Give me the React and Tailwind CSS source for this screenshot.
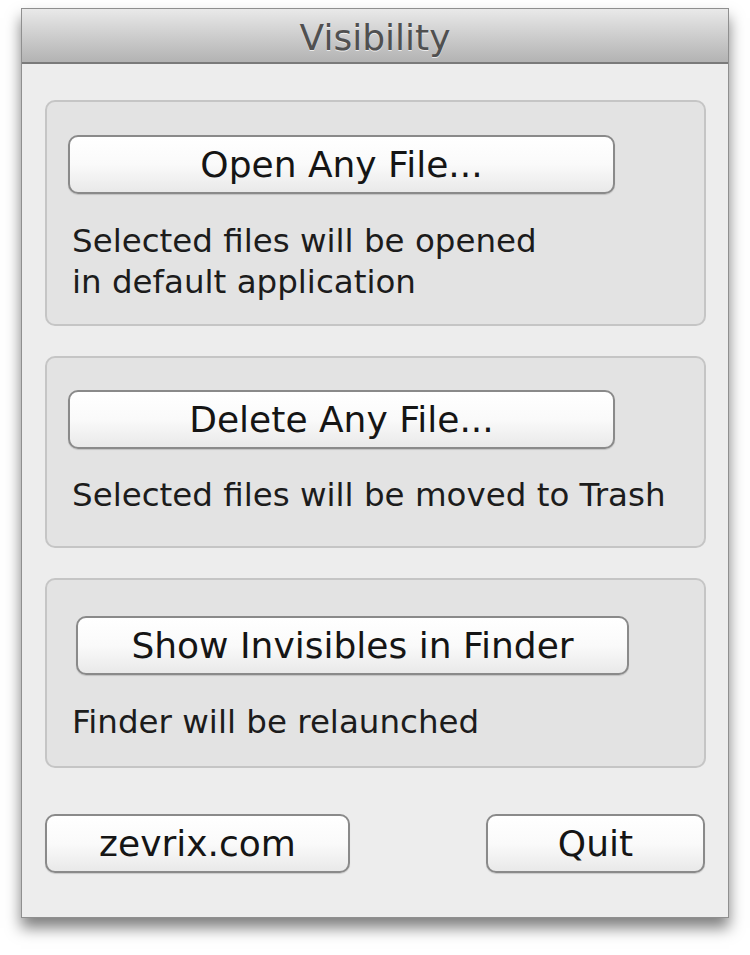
const btn =
  "flex items-center justify-center h-[59px] rounded-[10px] border-2 border-[#8a8a8a] bg-linear-to-b from-white via-[#fafafa] to-[#e9e9e9] text-[36px] leading-none text-[#151515] shadow-[0_1px_1px_rgba(0,0,0,0.15)]";

const label = "text-[32.5px] leading-[41px] text-[#1c1c1c] pl-[4px]";

const group =
  "flex flex-col rounded-[10px] border-2 border-[#c5c5c5] bg-[#e3e3e3] pl-[21px]";

export default function App() {
  return (
    <div className="w-[750px] h-[955px] bg-white pt-[8px] pl-[21px] font-['DejaVu_Sans',sans-serif]">
      <div className="w-[708px] h-[910px] flex flex-col border border-[#8f8f8f] bg-[#ededed] shadow-[0_10px_14px_rgba(0,0,0,0.5)]">
        {/* title bar */}
        <div className="h-[55px] flex items-center justify-center pt-[4px] border-b-2 border-[#7a7a7a] bg-linear-to-b from-[#e9e9e9] to-[#b3b3b3]">
          <span className="text-[36px] leading-none text-[#505050] [text-shadow:0_1px_0_rgba(255,255,255,0.7)]">
            Visibility
          </span>
        </div>

        <div className="flex flex-col pl-[23px] pr-[22px] pt-[36px]">
          <div className={`${group} h-[226px] pt-[33px]`}>
            <button className={`${btn} w-[547px]`}>Open Any File...</button>
            <p className={`${label} mt-[27px]`}>
              Selected files will be opened
              <br />
              in default application
            </p>
          </div>

          <div className={`${group} h-[192px] mt-[30px] pt-[32px]`}>
            <button className={`${btn} w-[547px]`}>Delete Any File...</button>
            <p className={`${label} mt-[26px]`}>
              Selected files will be moved to Trash
            </p>
          </div>

          <div className={`${group} h-[190px] mt-[30px] pt-[36px]`}>
            <button className={`${btn} w-[553px] ml-[8px]`}>
              Show Invisibles in Finder
            </button>
            <p className={`${label} mt-[27px]`}>Finder will be relaunched</p>
          </div>

          <div className="flex justify-between mt-[46px] pr-[1px]">
            <button className={`${btn} w-[305px]`}>zevrix.com</button>
            <button className={`${btn} w-[219px]`}>Quit</button>
          </div>
        </div>
      </div>
    </div>
  );
}
